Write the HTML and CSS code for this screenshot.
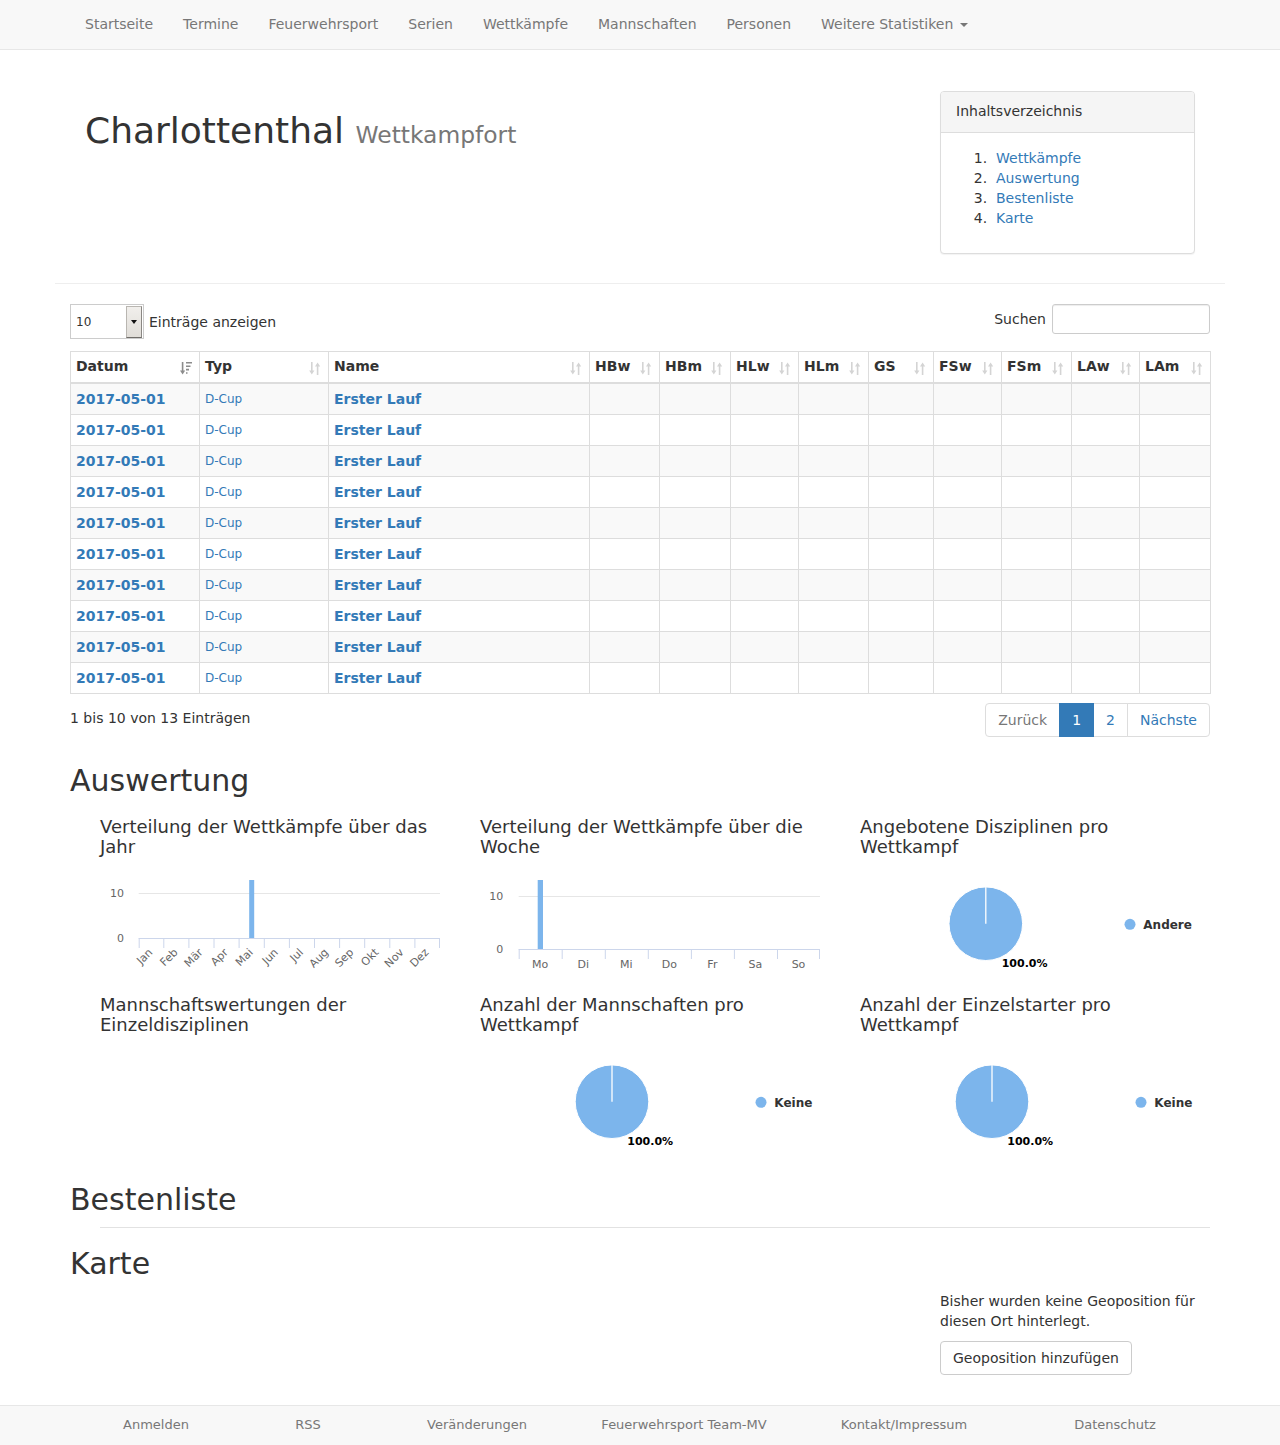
FILE: index.html
```html
<!DOCTYPE html>
<html lang="de">
<head>
<meta charset="utf-8">
<title>Charlottenthal - Wettkampfort</title>
<link rel="stylesheet" href="styles.css">
</head>
<body>
<nav class="navbar">
  <div class="container">
    <ul class="nav">
      <li><a href="#">Startseite</a></li>
      <li><a href="#">Termine</a></li>
      <li><a href="#">Feuerwehrsport</a></li>
      <li><a href="#">Serien</a></li>
      <li><a href="#">Wettkämpfe</a></li>
      <li><a href="#">Mannschaften</a></li>
      <li><a href="#">Personen</a></li>
      <li><a href="#">Weitere Statistiken <span class="caret"></span></a></li>
    </ul>
  </div>
</nav>

<div class="container">
  <div class="page-header">
    <div class="title-col">
      <h1>Charlottenthal <small>Wettkampfort</small></h1>
    </div>
    <div class="panel toc">
      <div class="panel-heading">Inhaltsverzeichnis</div>
      <div class="panel-body">
        <ol>
          <li><a href="#">Wettkämpfe</a></li>
          <li><a href="#">Auswertung</a></li>
          <li><a href="#">Bestenliste</a></li>
          <li><a href="#">Karte</a></li>
        </ol>
      </div>
    </div>
  </div>

  <div class="dt-top">
    <div class="dt-length">
      <div class="dt-select"><span class="dt-val">10</span><span class="dt-btn"><span class="dt-arrow"></span></span></div>
      <span>Einträge anzeigen</span>
    </div>
    <div class="dt-filter">
      <span>Suchen</span>
      <span class="dt-input"></span>
    </div>
  </div>

  <table class="dt">
    <colgroup>
      <col style="width:129px"><col style="width:129px"><col style="width:261px"><col style="width:70px"><col style="width:71px"><col style="width:68px"><col style="width:70px"><col style="width:65px"><col style="width:68px"><col style="width:70px"><col style="width:68px"><col style="width:71px">
    </colgroup>
    <thead>
      <tr>
        <th>Datum<svg class="si" viewBox="0 0 13 13" width="13" height="13"><path class="si-act" d="M1.8 0H3.4V8.5H5.2L2.6 12.5L0 8.5H1.8Z M6 0H12V1.6H6Z M6 3.4H10.5V5H6Z M6 6.8H9V8.4H6Z M6 10.2H7.5V11.8H6Z"/></svg></th>
        <th>Typ<svg class="si" viewBox="0 0 13 13" width="13" height="13"><path d="M2 0H3.6V8.5H5.4L2.8 12.5L0.2 8.5H2Z M9.4 13H7.8V4.5H6L8.6 0.5L11.2 4.5H9.4Z"/></svg></th>
        <th>Name<svg class="si" viewBox="0 0 13 13" width="13" height="13"><path d="M2 0H3.6V8.5H5.4L2.8 12.5L0.2 8.5H2Z M9.4 13H7.8V4.5H6L8.6 0.5L11.2 4.5H9.4Z"/></svg></th>
        <th>HBw<svg class="si" viewBox="0 0 13 13" width="13" height="13"><path d="M2 0H3.6V8.5H5.4L2.8 12.5L0.2 8.5H2Z M9.4 13H7.8V4.5H6L8.6 0.5L11.2 4.5H9.4Z"/></svg></th>
        <th>HBm<svg class="si" viewBox="0 0 13 13" width="13" height="13"><path d="M2 0H3.6V8.5H5.4L2.8 12.5L0.2 8.5H2Z M9.4 13H7.8V4.5H6L8.6 0.5L11.2 4.5H9.4Z"/></svg></th>
        <th>HLw<svg class="si" viewBox="0 0 13 13" width="13" height="13"><path d="M2 0H3.6V8.5H5.4L2.8 12.5L0.2 8.5H2Z M9.4 13H7.8V4.5H6L8.6 0.5L11.2 4.5H9.4Z"/></svg></th>
        <th>HLm<svg class="si" viewBox="0 0 13 13" width="13" height="13"><path d="M2 0H3.6V8.5H5.4L2.8 12.5L0.2 8.5H2Z M9.4 13H7.8V4.5H6L8.6 0.5L11.2 4.5H9.4Z"/></svg></th>
        <th>GS<svg class="si" viewBox="0 0 13 13" width="13" height="13"><path d="M2 0H3.6V8.5H5.4L2.8 12.5L0.2 8.5H2Z M9.4 13H7.8V4.5H6L8.6 0.5L11.2 4.5H9.4Z"/></svg></th>
        <th>FSw<svg class="si" viewBox="0 0 13 13" width="13" height="13"><path d="M2 0H3.6V8.5H5.4L2.8 12.5L0.2 8.5H2Z M9.4 13H7.8V4.5H6L8.6 0.5L11.2 4.5H9.4Z"/></svg></th>
        <th>FSm<svg class="si" viewBox="0 0 13 13" width="13" height="13"><path d="M2 0H3.6V8.5H5.4L2.8 12.5L0.2 8.5H2Z M9.4 13H7.8V4.5H6L8.6 0.5L11.2 4.5H9.4Z"/></svg></th>
        <th>LAw<svg class="si" viewBox="0 0 13 13" width="13" height="13"><path d="M2 0H3.6V8.5H5.4L2.8 12.5L0.2 8.5H2Z M9.4 13H7.8V4.5H6L8.6 0.5L11.2 4.5H9.4Z"/></svg></th>
        <th>LAm<svg class="si" viewBox="0 0 13 13" width="13" height="13"><path d="M2 0H3.6V8.5H5.4L2.8 12.5L0.2 8.5H2Z M9.4 13H7.8V4.5H6L8.6 0.5L11.2 4.5H9.4Z"/></svg></th>
      </tr>
    </thead>
    <tbody>
      <tr><td><a class="b" href="#">2017-05-01</a></td><td class="typ"><a href="#">D-Cup</a></td><td><a class="b" href="#">Erster Lauf</a></td><td></td><td></td><td></td><td></td><td></td><td></td><td></td><td></td><td></td></tr>
      <tr><td><a class="b" href="#">2017-05-01</a></td><td class="typ"><a href="#">D-Cup</a></td><td><a class="b" href="#">Erster Lauf</a></td><td></td><td></td><td></td><td></td><td></td><td></td><td></td><td></td><td></td></tr>
      <tr><td><a class="b" href="#">2017-05-01</a></td><td class="typ"><a href="#">D-Cup</a></td><td><a class="b" href="#">Erster Lauf</a></td><td></td><td></td><td></td><td></td><td></td><td></td><td></td><td></td><td></td></tr>
      <tr><td><a class="b" href="#">2017-05-01</a></td><td class="typ"><a href="#">D-Cup</a></td><td><a class="b" href="#">Erster Lauf</a></td><td></td><td></td><td></td><td></td><td></td><td></td><td></td><td></td><td></td></tr>
      <tr><td><a class="b" href="#">2017-05-01</a></td><td class="typ"><a href="#">D-Cup</a></td><td><a class="b" href="#">Erster Lauf</a></td><td></td><td></td><td></td><td></td><td></td><td></td><td></td><td></td><td></td></tr>
      <tr><td><a class="b" href="#">2017-05-01</a></td><td class="typ"><a href="#">D-Cup</a></td><td><a class="b" href="#">Erster Lauf</a></td><td></td><td></td><td></td><td></td><td></td><td></td><td></td><td></td><td></td></tr>
      <tr><td><a class="b" href="#">2017-05-01</a></td><td class="typ"><a href="#">D-Cup</a></td><td><a class="b" href="#">Erster Lauf</a></td><td></td><td></td><td></td><td></td><td></td><td></td><td></td><td></td><td></td></tr>
      <tr><td><a class="b" href="#">2017-05-01</a></td><td class="typ"><a href="#">D-Cup</a></td><td><a class="b" href="#">Erster Lauf</a></td><td></td><td></td><td></td><td></td><td></td><td></td><td></td><td></td><td></td></tr>
      <tr><td><a class="b" href="#">2017-05-01</a></td><td class="typ"><a href="#">D-Cup</a></td><td><a class="b" href="#">Erster Lauf</a></td><td></td><td></td><td></td><td></td><td></td><td></td><td></td><td></td><td></td></tr>
      <tr><td><a class="b" href="#">2017-05-01</a></td><td class="typ"><a href="#">D-Cup</a></td><td><a class="b" href="#">Erster Lauf</a></td><td></td><td></td><td></td><td></td><td></td><td></td><td></td><td></td><td></td></tr>
    </tbody>
  </table>

  <div class="dt-bottom">
    <div class="dt-info">1 bis 10 von 13 Einträgen</div>
    <ul class="pagination">
      <li class="disabled"><span>Zurück</span></li>
      <li class="active"><span>1</span></li>
      <li><a href="#">2</a></li>
      <li><a href="#">Nächste</a></li>
    </ul>
  </div>

  <h2 class="sec-title first">Auswertung</h2>
  <div class="charts">
    <div class="chart">
      <h4>Verteilung der Wettkämpfe über das Jahr</h4>
      <svg class="chart-svg" width="340" height="118" viewBox="0 -1 340 118">
        <line x1="38.7" y1="25.5" x2="340" y2="25.5" stroke="#e6e6e6" stroke-width="1"/>
        <rect x="149.2" y="12" width="5" height="58.5" fill="#7cb5ec"/>
        <line x1="38.7" y1="70.5" x2="340" y2="70.5" stroke="#ccd6eb" stroke-width="1"/>
        <g stroke="#ccd6eb" stroke-width="1">
          <line x1="39.2" y1="70" x2="39.2" y2="80"/><line x1="63.8" y1="70" x2="63.8" y2="80"/><line x1="88.9" y1="70" x2="88.9" y2="80"/><line x1="114" y1="70" x2="114" y2="80"/><line x1="139.1" y1="70" x2="139.1" y2="80"/><line x1="164.3" y1="70" x2="164.3" y2="80"/><line x1="189.4" y1="70" x2="189.4" y2="80"/><line x1="214.5" y1="70" x2="214.5" y2="80"/><line x1="239.6" y1="70" x2="239.6" y2="80"/><line x1="264.7" y1="70" x2="264.7" y2="80"/><line x1="289.8" y1="70" x2="289.8" y2="80"/><line x1="314.9" y1="70" x2="314.9" y2="80"/><line x1="339.5" y1="70" x2="339.5" y2="80"/>
        </g>
        <g class="ax">
          <text x="24" y="29" text-anchor="end">10</text>
          <text x="24" y="74" text-anchor="end">0</text>
        </g>
        <g class="ax">
          <text x="53.3" y="85" text-anchor="end" transform="rotate(-45 53.3 85)">Jan</text>
          <text x="78.4" y="85" text-anchor="end" transform="rotate(-45 78.4 85)">Feb</text>
          <text x="103.5" y="85" text-anchor="end" transform="rotate(-45 103.5 85)">Mär</text>
          <text x="128.6" y="85" text-anchor="end" transform="rotate(-45 128.6 85)">Apr</text>
          <text x="153.7" y="85" text-anchor="end" transform="rotate(-45 153.7 85)">Mai</text>
          <text x="178.8" y="85" text-anchor="end" transform="rotate(-45 178.8 85)">Jun</text>
          <text x="203.9" y="85" text-anchor="end" transform="rotate(-45 203.9 85)">Jul</text>
          <text x="229" y="85" text-anchor="end" transform="rotate(-45 229 85)">Aug</text>
          <text x="254.1" y="85" text-anchor="end" transform="rotate(-45 254.1 85)">Sep</text>
          <text x="279.2" y="85" text-anchor="end" transform="rotate(-45 279.2 85)">Okt</text>
          <text x="304.3" y="85" text-anchor="end" transform="rotate(-45 304.3 85)">Nov</text>
          <text x="329.4" y="85" text-anchor="end" transform="rotate(-45 329.4 85)">Dez</text>
        </g>
      </svg>
    </div>
    <div class="chart">
      <h4>Verteilung der Wettkämpfe über die Woche</h4>
      <svg class="chart-svg" width="340" height="118" viewBox="0 -1 340 118">
        <line x1="38.7" y1="28.5" x2="340" y2="28.5" stroke="#e6e6e6" stroke-width="1"/>
        <rect x="57.7" y="12" width="5.3" height="69.5" fill="#7cb5ec"/>
        <line x1="38.7" y1="81.5" x2="340" y2="81.5" stroke="#ccd6eb" stroke-width="1"/>
        <g stroke="#ccd6eb" stroke-width="1">
          <line x1="39.2" y1="81" x2="39.2" y2="91"/><line x1="82.2" y1="81" x2="82.2" y2="91"/><line x1="125.3" y1="81" x2="125.3" y2="91"/><line x1="168.3" y1="81" x2="168.3" y2="91"/><line x1="211.4" y1="81" x2="211.4" y2="91"/><line x1="254.4" y1="81" x2="254.4" y2="91"/><line x1="297.5" y1="81" x2="297.5" y2="91"/><line x1="339.5" y1="81" x2="339.5" y2="91"/>
        </g>
        <g class="ax">
          <text x="23.3" y="32" text-anchor="end">10</text>
          <text x="23.3" y="85" text-anchor="end">0</text>
          <text x="60.2" y="100" text-anchor="middle">Mo</text>
          <text x="103.3" y="100" text-anchor="middle">Di</text>
          <text x="146.3" y="100" text-anchor="middle">Mi</text>
          <text x="189.3" y="100" text-anchor="middle">Do</text>
          <text x="232.4" y="100" text-anchor="middle">Fr</text>
          <text x="275.4" y="100" text-anchor="middle">Sa</text>
          <text x="318.5" y="100" text-anchor="middle">So</text>
        </g>
      </svg>
    </div>
    <div class="chart">
      <h4>Angebotene Disziplinen pro Wettkampf</h4>
      <svg class="chart-svg" width="340" height="118" viewBox="0 -1 340 118">
        <circle cx="125.8" cy="55.7" r="36.8" fill="#7cb5ec" stroke="#fff" stroke-width="1"/>
        <line x1="125.8" y1="18.9" x2="125.8" y2="55.7" stroke="#fff" stroke-width="1.3"/>
        <text class="pie-lbl" x="141.7" y="98.7">100.0%</text>
        <circle cx="270" cy="56.3" r="5.5" fill="#7cb5ec"/>
        <text class="leg" x="283.3" y="60.6">Andere</text>
      </svg>
    </div>
    <div class="chart">
      <h4>Mannschaftswertungen der Einzeldisziplinen</h4>
      <svg class="chart-svg" width="340" height="118" viewBox="0 -1 340 118"></svg>
    </div>
    <div class="chart">
      <h4>Anzahl der Mannschaften pro Wettkampf</h4>
      <svg class="chart-svg" width="340" height="118" viewBox="0 -1 340 118">
        <circle cx="132" cy="55.7" r="36.8" fill="#7cb5ec" stroke="#fff" stroke-width="1"/>
        <line x1="132" y1="18.9" x2="132" y2="55.7" stroke="#fff" stroke-width="1.3"/>
        <text class="pie-lbl" x="147.3" y="99">100.0%</text>
        <circle cx="281" cy="56.3" r="5.5" fill="#7cb5ec"/>
        <text class="leg" x="294.3" y="60.6">Keine</text>
      </svg>
    </div>
    <div class="chart">
      <h4>Anzahl der Einzelstarter pro Wettkampf</h4>
      <svg class="chart-svg" width="340" height="118" viewBox="0 -1 340 118">
        <circle cx="132" cy="55.7" r="36.8" fill="#7cb5ec" stroke="#fff" stroke-width="1"/>
        <line x1="132" y1="18.9" x2="132" y2="55.7" stroke="#fff" stroke-width="1.3"/>
        <text class="pie-lbl" x="147.3" y="99">100.0%</text>
        <circle cx="281" cy="56.3" r="5.5" fill="#7cb5ec"/>
        <text class="leg" x="294.3" y="60.6">Keine</text>
      </svg>
    </div>
  </div>

  <h2 class="sec-title best-title">Bestenliste</h2>
  <hr class="sec-hr">

  <h2 class="sec-title map-title">Karte</h2>
  <div class="map-row">
    <div class="map-left"></div>
    <div class="map-right">
      <p>Bisher wurden keine Geoposition für diesen Ort hinterlegt.</p>
      <a class="btn" href="#">Geoposition hinzufügen</a>
    </div>
  </div>
</div>

<footer class="footer">
  <div class="container footer-grid">
    <a href="#">Anmelden</a>
    <a href="#">RSS</a>
    <a href="#">Veränderungen</a>
    <a href="#">Feuerwehrsport Team-MV</a>
    <a href="#">Kontakt/Impressum</a>
    <a href="#">Datenschutz</a>
  </div>
</footer>
</body>
</html>
```

FILE: styles.css
```css
* { box-sizing: border-box; }

body {
  margin: 0;
  font-family: "DejaVu Sans", "Noto Sans", sans-serif;
  font-size: 14px;
  line-height: 20px;
  color: #333;
  background: #fff;
}

a { color: #337ab7; text-decoration: none; }

.container {
  width: 1170px;
  margin: 0 auto;
  padding: 0 15px;
}

/* navbar */
.navbar {
  height: 50px;
  background: #f8f8f8;
  border-bottom: 1px solid #e7e7e7;
}
.nav {
  display: flex;
  list-style: none;
  margin: 0;
  padding: 0;
}
.nav a {
  display: block;
  padding: 14px 15px 15px;
  line-height: 20px;
  color: #777;
}
.caret {
  display: inline-block;
  width: 0;
  height: 0;
  margin-left: 2px;
  vertical-align: middle;
  border-top: 4px solid #777;
  border-left: 4px solid transparent;
  border-right: 4px solid transparent;
}

/* page header */
.page-header {
  display: flex;
  justify-content: space-between;
  align-items: flex-start;
  margin: 40px -15px 20px;
  padding-bottom: 9px;
  border-bottom: 1px solid #eee;
}
.title-col { padding-left: 30px; }
.page-header h1 {
  margin: 21px 0 0;
  font-size: 36px;
  line-height: 1.1;
  font-weight: 500;
  color: #333;
}
.page-header h1 small {
  font-size: 65%;
  font-weight: 400;
  color: #777;
}

.panel {
  width: 255px;
  margin: 1px 30px 20px 0;
  border: 1px solid #ddd;
  border-radius: 4px;
  box-shadow: 0 1px 1px rgba(0,0,0,.05);
  background: #fff;
}
.panel-heading {
  padding: 9px 15px 11px;
  background: #f5f5f5;
  border-bottom: 1px solid #ddd;
  border-radius: 3px 3px 0 0;
}
.panel-body { padding: 15px; }
.panel-body ol {
  margin: 0 0 10px;
  padding-left: 40px;
}
.panel-body li::marker {
  content: counter(list-item) ".\00a0\00a0";
}

/* datatable top */
.dt-top {
  display: flex;
  justify-content: space-between;
  align-items: flex-start;
  margin-top: 20px;
}
.dt-length {
  display: flex;
  align-items: center;
  gap: 5px;
  height: 35px;
}
.dt-select {
  display: flex;
  align-items: center;
  width: 74px;
  height: 35px;
  border: 1px solid #ccc;
  background: #fff;
  padding: 1px 1px 1px 0;
}
.dt-val {
  flex: 1;
  padding-left: 5px;
  font-size: 12px;
  color: #333;
  padding-top: 1px;
}
.dt-btn {
  width: 16px;
  height: 32px;
  display: flex;
  align-items: center;
  justify-content: center;
  background: linear-gradient(#f1efec, #e0ddd8);
  border: 1px solid #b9b6b1;
  border-right-color: #8a8783;
  border-bottom-color: #6f6c68;
}
.dt-arrow {
  width: 0;
  height: 0;
  border-top: 4px solid #111;
  border-left: 3.5px solid transparent;
  border-right: 3.5px solid transparent;
}
.dt-filter {
  display: flex;
  align-items: center;
  gap: 6px;
}
.dt-input {
  display: block;
  width: 158px;
  height: 30px;
  border: 1px solid #ccc;
  border-radius: 3px;
  box-shadow: inset 0 1px 1px rgba(0,0,0,.075);
}

/* table */
.dt {
  width: 1140px;
  margin-top: 12px;
  table-layout: fixed;
  border-collapse: collapse;
  border: 1px solid #ddd;
}
.dt th, .dt td {
  border: 1px solid #ddd;
  padding: 5px;
  height: 31px;
  line-height: 20px;
  text-align: left;
  white-space: nowrap;
  overflow: hidden;
}
.dt th {
  position: relative;
  font-weight: 700;
  border-bottom: 2px solid #ddd;
  padding-right: 20px;
  padding-top: 4px;
  padding-bottom: 6px;
}
.dt tbody tr:nth-child(odd) td { background: #f9f9f9; }
.si {
  position: absolute;
  right: 6px;
  bottom: 7px;
  fill: #d4d4d4;
}
.si .si-act { fill: #8c8c8c; }
.dt a.b { font-weight: 700; }
.dt td.typ { font-size: 12px; }

/* bottom */
.dt-bottom {
  display: flex;
  justify-content: space-between;
  align-items: flex-start;
  margin-top: 9px;
}
.dt-info { padding-top: 5px; }
.pagination {
  display: flex;
  list-style: none;
  margin: 0;
  padding: 0;
}
.pagination li > a, .pagination li > span {
  display: block;
  padding: 6px 12px;
  line-height: 20px;
  border: 1px solid #ddd;
  margin-left: -1px;
  background: #fff;
  color: #337ab7;
}
.pagination li:first-child > span {
  margin-left: 0;
  border-radius: 4px 0 0 4px;
}
.pagination li:last-child > a { border-radius: 0 4px 4px 0; }
.pagination li.disabled > span { color: #777; }
.pagination li.active > span {
  background: #337ab7;
  border-color: #337ab7;
  color: #fff;
  position: relative;
}

/* sections */
.sec-title {
  margin: 20px 0 10px;
  font-size: 30px;
  line-height: 1.1;
  font-weight: 500;
  color: #333;
}
.sec-title.first { margin-top: 27px; }
.sec-title.best-title { margin-bottom: 11px; }

.charts {
  display: grid;
  grid-template-columns: repeat(3, 380px);
}
.chart { padding-left: 30px; }
.chart h4 {
  margin: 10px 0;
  width: 340px;
  height: 40px;
  font-size: 18px;
  line-height: 1.1;
  font-weight: 500;
  color: #333;
}
.chart-svg { display: block; }
.ax text {
  font-family: "DejaVu Sans", sans-serif;
  font-size: 11px;
  fill: #666;
}
.pie-lbl {
  font-family: "DejaVu Sans", sans-serif;
  font-size: 11px;
  font-weight: 700;
  fill: #000;
}
.leg {
  font-family: "DejaVu Sans", sans-serif;
  font-size: 12px;
  font-weight: 700;
  fill: #333;
}

.sec-hr {
  margin: 0 0 19px 30px;
  border: 0;
  border-top: 1px solid #e2e2e2;
}
.map-title { margin: 0 0 11px; }

.map-row { display: flex; }
.map-left { width: 870px; }
.map-right { width: 270px; }
.map-right p { margin: 0 0 10px; }
.btn {
  display: inline-block;
  padding: 6px 12px;
  line-height: 20px;
  border: 1px solid #ccc;
  border-radius: 4px;
  background: #fff;
  color: #333;
}

/* footer */
.footer {
  margin-top: 30px;
  background: #f8f8f8;
  border-top: 1px solid #e7e7e7;
  padding: 9px 0 10px;
}
.footer-grid {
  display: grid;
  grid-template-columns: 172px 132px 206px 208px 232px 190px;
}
.footer-grid a {
  text-align: center;
  font-size: 13px;
  line-height: 20px;
  color: #777;
}
```
